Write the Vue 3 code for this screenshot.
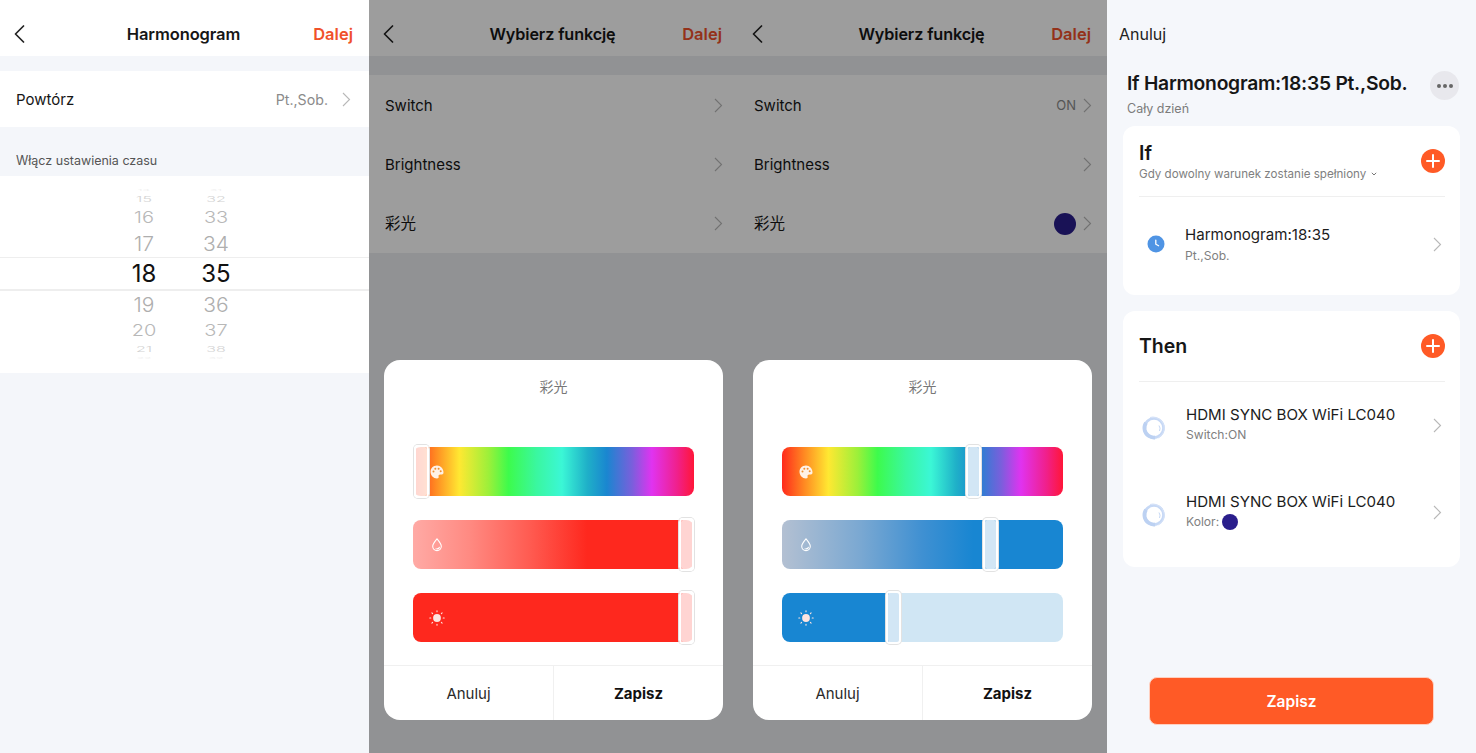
<script setup>
const wheel = [
  { h: 6, a: '14', b: '31', size: 12, sy: 0.2, color: '#eeeeee' },
  { h: 12, a: '15', b: '32', size: 16, sy: 0.5, color: '#d2d2d2' },
  { h: 25, a: '16', b: '33', size: 20, sy: 0.78, color: '#b8b8b8' },
  { h: 27, a: '17', b: '34', size: 21, sy: 0.98, color: '#aeaeae' },
  { h: 34, a: '18', b: '35', size: 24, sy: 1, color: '#111', sel: true },
  { h: 27, a: '19', b: '36', size: 21, sy: 0.98, color: '#aeaeae' },
  { h: 25, a: '20', b: '37', size: 20, sy: 0.78, color: '#b8b8b8' },
  { h: 12, a: '21', b: '38', size: 16, sy: 0.5, color: '#d2d2d2' },
  { h: 6, a: '22', b: '39', size: 12, sy: 0.2, color: '#eeeeee' }
]
const rainbow = 'linear-gradient(90deg,#ff2a1c 0%,#ff8a22 8%,#ffe832 16.5%,#9bf03a 27%,#3dfb4c 34%,#3af7a0 44%,#3bf7d6 53%,#1fb0c8 62%,#1a86d0 69%,#7a5fdc 78%,#e033f0 85%,#f0208c 94%,#ff1638 100%)'
const veil = 'rgba(255,255,255,.8)'
const panels = [
  {
    on: '', dot: false,
    sliders: [
      { bg: rainbow, thumb: 0, tint: veil, icon: 'palette' },
      { bg: 'linear-gradient(90deg,#ffaaa5 0%,#ff8a82 20%,#ff5a50 42%,#fe281e 62%,#fe281e 100%)', thumb: 94.3, tint: veil, icon: 'drop' },
      { bg: '#fe281e', thumb: 94.3, tint: veil, icon: 'sun' }
    ]
  },
  {
    on: 'ON', dot: true,
    sliders: [
      { bg: rainbow, thumb: 65, tint: '#d2e6f5', icon: 'palette' },
      { bg: 'linear-gradient(90deg,#b3c0d2 0%,#7aa8d2 28%,#3f90d2 50%,#1886d2 68%,#1886d2 100%)', thumb: 71, tint: '#d2e6f5', icon: 'drop' },
      { bg: 'linear-gradient(90deg,#1886d2 0 38%,#d0e6f4 38% 100%)', thumb: 36.8, tint: '#d2e6f5', icon: 'sun' }
    ]
  }
]
const devices = [
  { title: 'HDMI SYNC BOX WiFi LC040', sub: 'Switch:ON', dot: false },
  { title: 'HDMI SYNC BOX WiFi LC040', sub: 'Kolor:', dot: true }
]
</script>

<template>
  <div class="screen">
    <!-- Panel 1 -->
    <section class="panel">
      <header class="nav">
        <svg class="back" width="11" height="18" viewBox="0 0 11 18"><path d="M9.5 1 1.5 9l8 8" /></svg>
        <h1>Harmonogram</h1>
        <span class="next">Dalej</span>
      </header>
      <div class="repeat">
        <span class="label">Powtórz</span>
        <span class="value">Pt.,Sob.</span>
        <svg class="chev" width="9" height="15" viewBox="0 0 9 15"><path d="m1 1 6.5 6.5L1 14" /></svg>
      </div>
      <div class="section-title">Włącz ustawienia czasu</div>
      <div class="wheel">
        <div
          v-for="r in wheel"
          :key="r.a"
          class="wheel-row"
          :class="{ sel: r.sel }"
          :style="{ height: r.h + 'px' }"
        >
          <span class="cell" :style="{ fontSize: r.size + 'px', color: r.color, transform: 'scaleY(' + r.sy + ')' }">{{ r.a }}</span>
          <span class="cell" :style="{ fontSize: r.size + 'px', color: r.color, transform: 'scaleY(' + r.sy + ')' }">{{ r.b }}</span>
        </div>
      </div>
    </section>

    <!-- Panels 2, 3 -->
    <section v-for="(p, pi) in panels" :key="pi" class="panel dim">
      <header class="nav">
        <svg class="back" width="11" height="18" viewBox="0 0 11 18"><path d="M9.5 1 1.5 9l8 8" /></svg>
        <h1 class="fn-title">Wybierz funkcję</h1>
        <span class="next">Dalej</span>
      </header>
      <div class="fn-list">
        <div class="fn-row">
          <span class="label">Switch</span>
          <span v-if="p.on" class="value on">{{ p.on }}</span>
          <svg class="chev" width="9" height="15" viewBox="0 0 9 15"><path d="m1 1 6.5 6.5L1 14" /></svg>
        </div>
        <div class="fn-row">
          <span class="label">Brightness</span>
          <svg class="chev" width="9" height="15" viewBox="0 0 9 15"><path d="m1 1 6.5 6.5L1 14" /></svg>
        </div>
        <div class="fn-row">
          <span class="label cjk">彩光</span>
          <span v-if="p.dot" class="fn-dot"></span>
          <svg class="chev" width="9" height="15" viewBox="0 0 9 15"><path d="m1 1 6.5 6.5L1 14" /></svg>
        </div>
      </div>
      <div class="scrim"></div>
      <div class="modal">
        <div class="modal-title">彩光</div>
        <div class="sliders">
          <div v-for="s in p.sliders" :key="s.icon" class="slider" :style="{ background: s.bg }">
            <svg v-if="s.icon === 'palette'" class="sl-icon" width="16" height="16" viewBox="0 0 16 16">
              <path fill="#fff1e6" d="M8 1.5C4.2 1.5 1.5 4.3 1.5 7.8c0 3.7 3 6.7 6.4 6.7 1.5 0 2-1 1.7-2-.3-1.1.3-2 1.6-2h1.6c1.1 0 1.7-.8 1.7-2.2 0-3.700-3-6.800-6.500-6.800Z" />
              <circle cx="4.500" cy="7.500" r="1" fill="#f09030" />
              <circle cx="6.300" cy="4.700" r="1" fill="#f09030" />
              <circle cx="9.600" cy="4.700" r="1" fill="#f09030" />
              <circle cx="11.700" cy="7.300" r="1" fill="#f09030" />
            </svg>
            <svg v-else-if="s.icon === 'drop'" class="sl-icon" width="16" height="16" viewBox="0 0 16 16">
              <path fill="none" stroke="#fff" stroke-width="1.100" d="M8 1.800c2.600 3 4.300 5 4.300 7.500a4.300 4.300 0 0 1-8.600 0C3.700 6.800 5.400 4.800 8 1.800Z" />
              <path fill="#fff" d="M11 9.400a3 3 0 0 1-3 3c-.8 0-1.500-.3-2-.8 2.300-.2 3.600-1.100 5-2.200Z" />
            </svg>
            <svg v-else class="sl-icon" width="16" height="16" viewBox="0 0 16 16">
              <circle cx="8" cy="8" r="3.900" fill="#fde4e0" />
              <g stroke="#fde4e0" stroke-width="1.100" stroke-linecap="round">
                <path d="M8 .8v1M8 14.200v1M.8 8h1M14.200 8h1M2.900 2.900l.7.7M12.400 12.400l.7.7M2.900 13.100l.7-.7M12.400 3.600l.7-.7" />
              </g>
            </svg>
            <div class="thumb" :style="{ left: s.thumb + '%', backgroundColor: s.tint }"></div>
          </div>
        </div>
        <div class="modal-actions">
          <button class="act">Anuluj</button>
          <button class="act strong">Zapisz</button>
        </div>
      </div>
    </section>

    <!-- Panel 4 -->
    <section class="panel last">
      <div class="cancel">Anuluj</div>
      <div class="head">
        <div class="head-text">
          <h2>If Harmonogram:18:35 Pt.,Sob.</h2>
          <div class="head-sub">Cały dzień</div>
        </div>
        <div class="more"><i></i><i></i><i></i></div>
      </div>

      <div class="card card-if">
        <div class="card-head">
          <div class="card-head-text">
            <h3>If</h3>
            <div class="cond">
              Gdy dowolny warunek zostanie spełniony
              <svg width="6" height="4" viewBox="0 0 6 4"><path d="m.8.8 2.200 2.200L5.200.8" fill="none" stroke="#777" stroke-width="1" /></svg>
            </div>
          </div>
          <div class="plus"></div>
        </div>
        <div class="item clock-item">
          <svg class="clock" width="18" height="18" viewBox="0 0 18 18">
            <circle cx="9" cy="9" r="8.500" fill="#4f94e4" />
            <path d="M8.800 5.200v4l2.800 1.600" fill="none" stroke="#fff" stroke-width="1.300" stroke-linecap="round" />
          </svg>
          <div class="item-text">
            <div class="item-title">Harmonogram:18:35</div>
            <div class="item-sub">Pt.,Sob.</div>
          </div>
          <svg class="chev" width="9" height="15" viewBox="0 0 9 15"><path d="m1 1 6.500 6.500L1 14" /></svg>
        </div>
      </div>

      <div class="card card-then">
        <div class="card-head">
          <h3>Then</h3>
          <div class="plus"></div>
        </div>
        <div v-for="(d, i) in devices" :key="i" class="item device">
          <svg class="ring" width="28" height="28" viewBox="0 0 28 28">
            <circle cx="14" cy="14" r="9.500" fill="none" stroke="#c6d8f5" stroke-width="2.600" />
            <path d="M6 8.800A9.500 9.500 0 0 0 8.500 21.800 9.500 9.500 0 0 0 15 23.500" fill="none" stroke="#bcd1f2" stroke-width="3.800" />
            <path d="M10 3.500a11.500 11.500 0 0 1 14 8.500 11.500 11.500 0 0 1-6 12" fill="none" stroke="#d4e1f7" stroke-width="1.100" />
            <path d="M19 11.500a5.500 5.500 0 0 1 .5 5.500" fill="none" stroke="#c6d8f5" stroke-width="1" />
          </svg>
          <div class="item-text">
            <div class="item-title">{{ d.title }}</div>
            <div class="item-sub">{{ d.sub }}<span v-if="d.dot" class="color-dot"></span></div>
          </div>
          <svg class="chev" width="9" height="15" viewBox="0 0 9 15"><path d="m1 1 6.500 6.500L1 14" /></svg>
        </div>
      </div>

      <div class="save-wrap"><button class="save">Zapisz</button></div>
    </section>
  </div>
</template>

<style scoped>
.screen {
  display: flex;
  width: 1476px;
  height: 753px;
  overflow: hidden;
  font-family: Inter, "Noto Sans CJK SC", "Liberation Sans", sans-serif;
  color: #161616;
}
.panel {
  position: relative;
  width: 369px;
  height: 753px;
  flex: none;
  background: #f4f6fa;
  display: flex;
  flex-direction: column;
}
.dim { background: #ebedf1; }
.nav {
  height: 56px;
  background: #fff;
  display: grid;
  grid-template-columns: 1fr auto 1fr;
  align-items: center;
  padding: 12px 16px 0 14px;
  box-sizing: border-box;
  flex: none;
}
.nav h1 { margin: 0; font-size: 16.500px; font-weight: 600; letter-spacing: -.1px; }
.nav .fn-title { font-size: 16.200px; letter-spacing: -.12px; }
.back path { fill: none; stroke: #222; stroke-width: 1.700; stroke-linecap: round; stroke-linejoin: round; }
.next { color: #f0512b; font-size: 16.500px; font-weight: 600; justify-self: end; }
.chev { flex: none; }
.chev path { fill: none; stroke: #b8b8b8; stroke-width: 1.100; }
.repeat {
  margin-top: 15px;
  height: 56px;
  background: #fff;
  display: flex;
  align-items: center;
  padding: 0 18px 0 16px;
  flex: none;
}
.label { font-size: 15px; flex: 1; }
.label.cjk { font-size: 15.500px; margin-top: -3px; }
.value { font-size: 14.200px; color: #8b8b8b; margin-right: 14px; }
.section-title {
  height: 49px;
  box-sizing: border-box;
  padding: 26px 16px 0;
  font-size: 12.500px;
  line-height: 15px;
  color: #555;
  flex: none;
}
.wheel {
  height: 197px;
  box-sizing: border-box;
  padding-top: 11px;
  background: #fff;
  flex: none;
}
.wheel-row {
  display: flex;
  align-items: center;
  padding-left: 108px;
  box-sizing: border-box;
  overflow: hidden;
  font-weight: 300;
}
.wheel-row.sel { border-top: 1px solid #eeeeee; border-bottom: 2px solid #eeeeee; font-weight: 400; padding-top: 1px; }
.cell { width: 72px; text-align: center; line-height: 1; display: block; }

.fn-list {
  margin-top: 19px;
  background: #fff;
  height: 178px;
  display: flex;
  flex-direction: column;
  flex: none;
}
.fn-row {
  flex: 1;
  display: flex;
  align-items: center;
  padding: 1px 15px 0 16px;
}
.on { color: #8b8b8b; font-size: 13px; margin-right: 7px; }
.fn-dot { width: 22px; height: 22px; border-radius: 50%; background: #2a1e8c; margin-right: 7px; }
.scrim { position: absolute; inset: 0; background: rgba(0, 0, 0, .385); }
.modal {
  position: absolute;
  left: 15px;
  top: 360px;
  width: 339px;
  height: 360px;
  background: #fff;
  border-radius: 16px;
  display: flex;
  flex-direction: column;
  overflow: hidden;
}
.modal-title {
  height: 87px;
  box-sizing: border-box;
  padding-top: 18px;
  text-align: center;
  font-size: 14px;
  line-height: 18px;
  color: #777;
  flex: none;
}
.sliders {
  display: flex;
  flex-direction: column;
  gap: 24px;
  padding: 0 29px;
  height: 218px;
  flex: none;
}
.slider {
  position: relative;
  height: 49px;
  border-radius: 8px;
  flex: none;
  display: flex;
  align-items: center;
}
.sl-icon { margin-left: 16px; }
.thumb {
  position: absolute;
  top: -2px;
  bottom: -2px;
  width: 11px;
  margin-left: 1px;
  box-sizing: content-box;
  border: 2px solid #fff;
  background-clip: padding-box;
  border-radius: 4px;
  box-shadow: 0 0 0 1px #e2e2e2;
}
.modal-actions {
  flex: 1;
  display: flex;
  border-top: 1px solid #f0f0f0;
}
.act {
  flex: 1;
  background: none;
  border: 0;
  padding: 0;
  font: inherit;
  font-size: 15px;
  color: #2a2a2a;
}
.act.strong { font-weight: 700; color: #111; border-left: 1px solid #f0f0f0; }

.last { background: #f5f7fb; }
.cancel { padding: 25px 12px 0; font-size: 16px; line-height: 19px; color: #222; flex: none; }
.head {
  display: flex;
  align-items: flex-start;
  padding: 27px 17px 0 20px;
  height: 82px;
  box-sizing: border-box;
  flex: none;
}
.head-text { flex: 1; }
.head h2 { margin: 0; font-size: 19.300px; line-height: 24px; font-weight: 600; letter-spacing: -.25px; white-space: nowrap; }
.head-sub { font-size: 12.500px; line-height: 15px; margin-top: 6px; color: #7c7c7c; }
.more {
  width: 29px;
  height: 29px;
  border-radius: 50%;
  background: #e8e8ed;
  display: flex;
  align-items: center;
  justify-content: center;
  gap: 2px;
  flex: none;
}
.more i { width: 4px; height: 4px; border-radius: 50%; background: #666; }
.card {
  margin: 0 16px;
  background: #fff;
  border-radius: 12px;
  flex: none;
}
.card-if { height: 169px; }
.card-then { height: 256px; margin-top: 16px; }
.card-head {
  height: 71px;
  display: flex;
  align-items: center;
  justify-content: space-between;
  margin: 0 15px 0 16px;
  border-bottom: 1px solid #efefef;
  box-sizing: border-box;
}
.card h3 { margin: 0; font-size: 19.500px; font-weight: 600; line-height: 24px; }
.cond { font-size: 11.600px; line-height: 14px; color: #808080; display: flex; align-items: center; gap: 5px; margin-top: 2px; white-space: nowrap; }
.plus {
  position: relative;
  width: 24px;
  height: 24px;
  border-radius: 50%;
  background: #ff5a26;
  flex: none;
}
.plus::before, .plus::after {
  content: "";
  position: absolute;
  background: #fff;
  border-radius: 1px;
}
.plus::before { left: 5px; right: 5px; top: 11px; height: 2px; }
.plus::after { top: 5px; bottom: 5px; left: 11px; width: 2px; }
.item {
  display: flex;
  align-items: center;
  padding-right: 18px;
  box-sizing: border-box;
}
.clock-item { height: 94px; padding-left: 24px; }
.clock { flex: none; margin-right: 20px; }
.device { height: 87px; padding-left: 16px; padding-bottom: 4px; }
.device .chev { margin-top: 4px; }
.device .item-sub { margin-top: 2px; }
.ring { flex: none; margin-left: 1px; margin-right: 18px; margin-top: 9px; }
.item-text { flex: 1; }
.item-title { font-size: 15.100px; line-height: 20px; color: #1c1c1c; white-space: nowrap; }
.item-sub { font-size: 12.100px; line-height: 15px; margin-top: 3px; color: #808080; display: flex; align-items: center; height: 15px; }
.color-dot { width: 16px; height: 16px; border-radius: 50%; background: #2a1e8c; margin-left: 3px; }
.save-wrap {
  flex: 1;
  display: flex;
  justify-content: center;
  align-items: flex-start;
  padding-top: 110px;
}
.save {
  width: 285px;
  height: 48px;
  border: 1px solid #ffd0c0;
  border-radius: 8px;
  background: #ff5a26;
  color: #fff;
  font: inherit;
  font-size: 15.500px;
  font-weight: 600;
}
</style>
